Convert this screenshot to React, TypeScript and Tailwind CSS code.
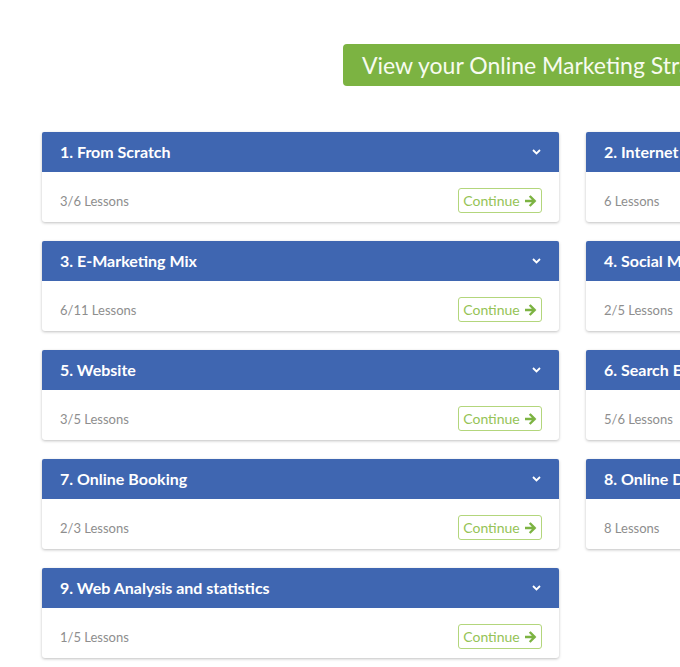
import React from "react";

const items = [
  { title: "1. From Scratch", lessons: "3/6 Lessons", cont: true },
  { title: "2. Internet Marketing", lessons: "6 Lessons", cont: false },
  { title: "3. E-Marketing Mix", lessons: "6/11 Lessons", cont: true },
  { title: "4. Social Media", lessons: "2/5 Lessons", cont: true },
  { title: "5. Website", lessons: "3/5 Lessons", cont: true },
  { title: "6. Search Engine Optimization", lessons: "5/6 Lessons", cont: true },
  { title: "7. Online Booking", lessons: "2/3 Lessons", cont: true },
  { title: "8. Online Distribution", lessons: "8 Lessons", cont: false },
  { title: "9. Web Analysis and statistics", lessons: "1/5 Lessons", cont: true },
];

function Chevron() {
  return (
    <svg width="9" height="6" viewBox="0 0 9 6" fill="none">
      <path d="M1 1l3.5 3.5L8 1" stroke="white" strokeWidth="1.8" />
    </svg>
  );
}

function Arrow() {
  return (
    <svg width="12" height="12" viewBox="0 0 13 12" fill="none">
      <path d="M1 6h9M6 1.5L10.5 6 6 10.5" stroke="#7cb342" strokeWidth="2.6" strokeLinecap="square" />
    </svg>
  );
}

export default function App() {
  return (
    <div
      className="h-[667px] w-full overflow-hidden bg-white"
      style={{ fontFamily: "Lato, 'Open Sans', sans-serif" }}
    >
      <div className="w-[1200px]">
        <div className="pt-[44px] pl-[343px]">
          <div className="inline-flex h-[42px] items-center rounded-[4px] bg-[#7cb342] px-[19px] text-[23px] text-[#f7fbef] whitespace-nowrap">
            View your Online Marketing Strategy
          </div>
        </div>
        <div className="ml-[42px] mt-[46px] grid w-[1062px] grid-cols-[517px_517px] gap-x-[27px] gap-y-[19px]">
          {items.map((it) => (
            <div key={it.title} className="rounded-[3px] bg-white shadow-[0_1px_3px_rgba(0,0,0,0.25)]">
              <div className="flex h-[40px] items-center justify-between bg-[#3f66b1] pl-[18px] pr-[18px] rounded-t-[2px]">
                <span className="text-[16px] font-bold text-white">{it.title}</span>
                <Chevron />
              </div>
              <div className="flex h-[50px] items-center justify-between pl-[18px] pr-[17px] pt-[7px]">
                <span className="mt-[3px] text-[13px] text-[#8e8e8e]">{it.lessons}</span>
                {it.cont && (
                  <span className="flex h-[25px] w-[84px] items-center justify-center gap-[5px] rounded-[3px] border border-[#b3d67c] text-[14px] text-[#95c356]">
                    Continue
                    <Arrow />
                  </span>
                )}
              </div>
            </div>
          ))}
        </div>
      </div>
    </div>
  );
}
